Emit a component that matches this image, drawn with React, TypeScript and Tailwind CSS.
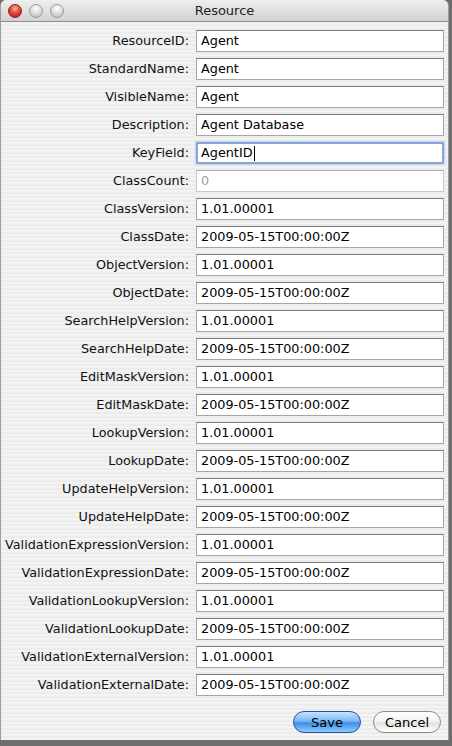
import React from 'react';

type Field = { label: string; value: string; focused?: boolean; disabled?: boolean };

const fields: Field[] = [
    { label: 'ResourceID', value: 'Agent' },
    { label: 'StandardName', value: 'Agent' },
    { label: 'VisibleName', value: 'Agent' },
    { label: 'Description', value: 'Agent Database' },
    { label: 'KeyField', value: 'AgentID', focused: true },
    { label: 'ClassCount', value: '0', disabled: true },
    { label: 'ClassVersion', value: '1.01.00001' },
    { label: 'ClassDate', value: '2009-05-15T00:00:00Z' },
    { label: 'ObjectVersion', value: '1.01.00001' },
    { label: 'ObjectDate', value: '2009-05-15T00:00:00Z' },
    { label: 'SearchHelpVersion', value: '1.01.00001' },
    { label: 'SearchHelpDate', value: '2009-05-15T00:00:00Z' },
    { label: 'EditMaskVersion', value: '1.01.00001' },
    { label: 'EditMaskDate', value: '2009-05-15T00:00:00Z' },
    { label: 'LookupVersion', value: '1.01.00001' },
    { label: 'LookupDate', value: '2009-05-15T00:00:00Z' },
    { label: 'UpdateHelpVersion', value: '1.01.00001' },
    { label: 'UpdateHelpDate', value: '2009-05-15T00:00:00Z' },
    { label: 'ValidationExpressionVersion', value: '1.01.00001' },
    { label: 'ValidationExpressionDate', value: '2009-05-15T00:00:00Z' },
    { label: 'ValidationLookupVersion', value: '1.01.00001' },
    { label: 'ValidationLookupDate', value: '2009-05-15T00:00:00Z' },
    { label: 'ValidationExternalVersion', value: '1.01.00001' },
    { label: 'ValidationExternalDate', value: '2009-05-15T00:00:00Z' },
];

const Light: React.FC<{ red?: boolean }> = ({ red }) => (
    <span
        className={
            red
                ? 'block w-[14px] h-[14px] rounded-full border border-[#8f1f1a] bg-[radial-gradient(circle_at_50%_30%,#ffb3a8_0%,#e2453a_45%,#a51d14_100%)]'
                : 'block w-[14px] h-[14px] rounded-full border border-[#9a9a9a] bg-[radial-gradient(circle_at_50%_30%,#ffffff_0%,#dcdcdc_50%,#b4b4b4_100%)]'
        }
    />
);

const TextField: React.FC<{ field: Field }> = ({ field }) => {
    const border = field.focused
        ? 'border-2 border-[#84a9d9] shadow-[0_0_2px_#7aa6e0]'
        : field.disabled
            ? 'border border-[#c9c9c9] border-t-[#a9a9a9]'
            : 'border border-[#a6a6a6] border-t-[#7c7c7c]';
    return (
        <div className={`h-[22px] bg-white flex items-center ${border} ${field.focused ? 'pl-[3px]' : 'pl-[4px]'}`}>
            <span className={field.disabled ? 'text-[#a0a0a0]' : 'text-black'}>{field.value}</span>
            {field.focused && <span className="ml-px w-px h-[15px] bg-black" />}
        </div>
    );
};

export default function App() {
    return (
        <div className="w-[452px] h-[746px] bg-[#6e6e6e] overflow-hidden font-['DejaVu_Sans',sans-serif] text-[12.8px]">
            <div className="w-[449px] h-[740px] flex flex-col bg-[#efefef] border-x border-[#9c9c9c] rounded-t-[6px] overflow-hidden">
                <div className="h-[22px] shrink-0 relative flex items-center bg-[linear-gradient(#eeeeee,#d2d2d2)] border-b border-[#8e8e8e]">
                    <div className="flex items-center gap-[7px] pl-[7px]">
                        <Light red />
                        <Light />
                        <Light />
                    </div>
                    <span className="absolute inset-0 flex items-center justify-center text-[13px] text-[#222]">Resource</span>
                </div>
                <div className="flex-1 flex flex-col bg-[repeating-linear-gradient(#f3f3f3_0px,#f3f3f3_2px,#ececec_2px,#ececec_4px)]">
                    <div className="grid grid-cols-[188px_248px] gap-x-[7px] gap-y-[6px] pt-[8px]">
                        {fields.map(f => (
                            <React.Fragment key={f.label}>
                                <div className="h-[22px] flex items-center justify-end text-[#111]">{f.label}:</div>
                                <TextField field={f} />
                            </React.Fragment>
                        ))}
                    </div>
                    <div className="flex justify-end gap-[12px] pr-[7px] mt-[15px]">
                        <button className="w-[68px] h-[22px] rounded-full border border-[#2a4f9e] bg-[linear-gradient(#c6e3ff_0%,#7ab8f5_45%,#3f8fe4_55%,#8ccaff_100%)] text-black text-[13px] leading-none">Save</button>
                        <button className="w-[68px] h-[22px] rounded-full border border-[#8a8a8a] bg-[linear-gradient(#ffffff_0%,#f4f4f4_45%,#e2e2e2_55%,#ffffff_100%)] text-black text-[13px] leading-none">Cancel</button>
                    </div>
                </div>
            </div>
        </div>
    );
}
